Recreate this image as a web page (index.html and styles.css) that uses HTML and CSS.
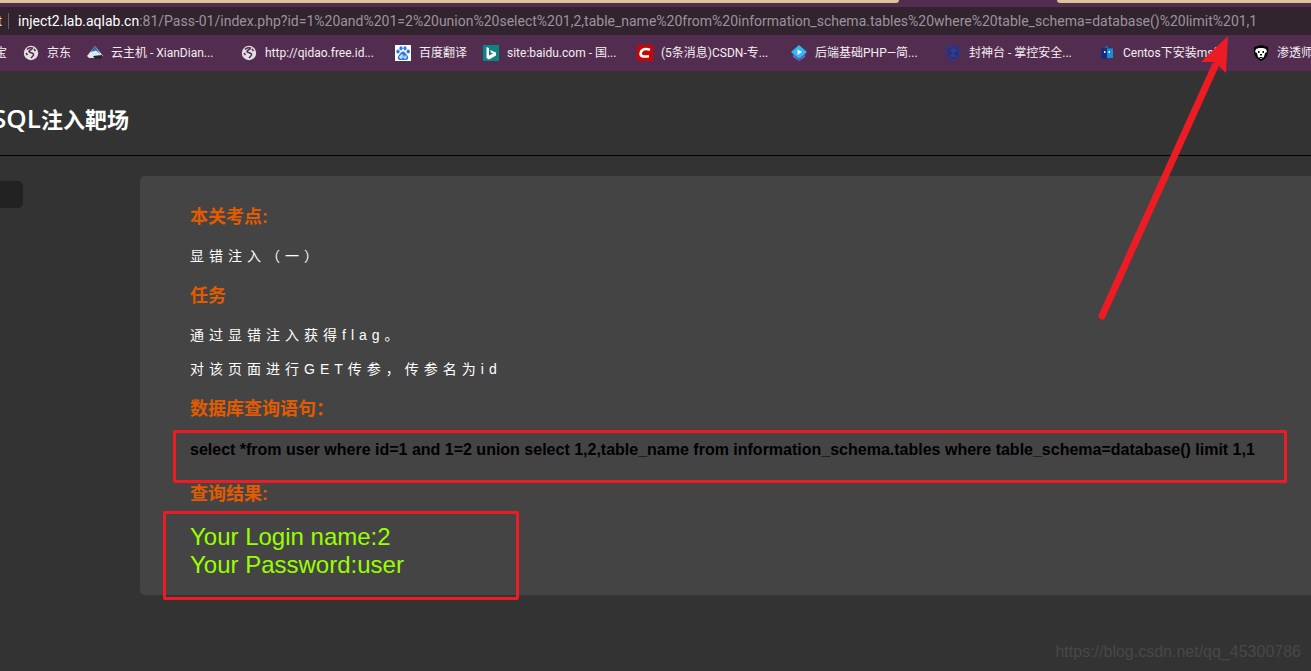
FILE: index.html
```
<!DOCTYPE html>
<html lang="zh-CN">
<head>
<meta charset="utf-8">
<title>SQL注入靶场</title>
<link rel="stylesheet" href="styles.css">
</head>
<body>
<div class="browser">
  <div class="tabs"><span class="tab tab-first"></span><span class="tab tab-last"></span></div>
  <div class="address"><span class="identity">t</span><span class="divider"></span><span class="url"><b>inject2.lab.aqlab.cn</b>:81/Pass-01/index.php?id=1%20and%201=2%20union%20select%201,2,table_name%20from%20information_schema.tables%20where%20table_schema=database()%20limit%201,1</span></div>
  <nav class="bookmarks">
    <a class="mark mark-cut" href="#">宝</a>
    <a class="mark mark-jd" href="#"><svg viewBox="0 0 16 16"><circle cx="8" cy="8" r="7.2" fill="#e4dfe3"/><path d="M4 4.500c1.500-2 4-2 5.500-1.500-.5 2-3 1.500-3.500 3.500 1 1.500 3.500 1 4.500 2.500.5 2-1.500 2.500-2.500 4M11 4l1.500 2M3 8l1.500 2" fill="none" stroke="#532d4f" stroke-width="1.500"/></svg>京东</a>
    <a class="mark mark-long" href="#"><svg viewBox="0 0 16 16"><path d="M8 1L0 11l2 2h5l9-2z" fill="#dfe6ec"/><path d="M8 1L3.500 7 9 5.500 13 9z" fill="#226da3"/><path d="M6 11l9-1v2l-1 2h-2l-1-1-1 1H8z" fill="#202432"/></svg>云主机 - XianDian...</a>
    <a class="mark mark-long" href="#"><svg viewBox="0 0 16 16"><circle cx="8" cy="8" r="7.2" fill="#e4dfe3"/><path d="M4 4.500c1.500-2 4-2 5.500-1.500-.5 2-3 1.500-3.500 3.500 1 1.500 3.500 1 4.500 2.500.5 2-1.500 2.500-2.500 4M11 4l1.500 2M3 8l1.500 2" fill="none" stroke="#532d4f" stroke-width="1.500"/></svg>http://qidao.free.id...</a>
    <a class="mark mark-fanyi" href="#"><svg viewBox="0 0 16 16"><path d="M0 0h16v16H0z" fill="#fff"/><g fill="#2b78e4"><ellipse cx="3" cy="6.5" rx="1.7" ry="2.1"/><ellipse cx="6" cy="3.3" rx="1.6" ry="2.1"/><ellipse cx="10" cy="3.3" rx="1.6" ry="2.1"/><ellipse cx="13.2" cy="6.5" rx="1.7" ry="2.1"/><path d="M8 6.500c2 0 2.500 2 4 3.500 2 2 1.500 5-1 5H5c-2.500 0-3-3-1-5C5.500 8.500 6 6.500 8 6.500z"/></g><path d="M7 9v4H5v-2h2M9 10.500V13h2v-2.500" fill="none" stroke="#fff"/></svg>百度翻译</a>
    <a class="mark mark-long" href="#"><svg viewBox="0 0 16 16"><path d="M0 0h16v16H0z" fill="#0c8484"/><path d="M3.500 2l2.500 1v7.500l4-2-2-1L7 5l6 2.500v3L6 14.500 3.500 13z" fill="#fff"/></svg>site:baidu.com - 国...</a>
    <a class="mark mark-long" href="#"><svg viewBox="0 0 16 16"><path d="M0 0h16v16H0z" fill="#ca0303"/><path d="M13 4.700C9 3.500 5.500 3.600 4 7c-1.500 4 1 5.300 8 4.200" fill="none" stroke="#fff" stroke-width="2.600"/></svg>(5条消息)CSDN-专...</a>
    <a class="mark mark-long" href="#"><svg viewBox="0 0 16 16"><path d="M2 9l6 6 6-6v3l-6 4-6-4z" fill="#6470e8"/><path d="M8 0l8 7-8 7-8-7z" fill="#31b9f5"/><path d="M6.500 4.500L11 7l-4.500 3z" fill="#fff"/></svg>后端基础PHP—简...</a>
    <a class="mark mark-long" href="#"><svg viewBox="0 0 16 16"><path d="M2 2c3 0 4 0 6-1 2 1 3 1 6 1v8c0 2-3 4-6 5-3-1-6-3-6-5z" fill="#382b69" stroke="#29388e" stroke-width="1.500"/><path d="M5 5h6l-5 6h5M8 3v4" fill="none" stroke="#2544aa" stroke-width="1.300"/></svg>封神台 - 掌控安全...</a>
    <a class="mark mark-long" href="#"><svg viewBox="0 0 16 16"><path d="M2 3.500h6V14H3l-1-1z" fill="#172b80"/><path d="M8 3.500h6V13H8z" fill="#148fda"/><path d="M6 1h3v2H6z" fill="#216398"/><path d="M5 6h1.500v2H5zM9.500 6H11v2H9.500z" fill="#e4f4ff"/></svg>Centos下安装msf...</a>
    <a class="mark mark-long" href="#"><svg viewBox="0 0 16 16"><path d="M1 2l7-2 7 2c1 6-1 12-7 14C2 14 0 8 1 2z" fill="#050505"/><path d="M3 4l3-1h4l3 1 1 3-2 1-1 4-3 2-3-2-1-4-2-1z" fill="#fff"/><path d="M5 6h1.500v2H5zM9.500 6H11v2H9.500zM7 9h2v1.500H7zM6.500 12h3v1h-3z" fill="#050505"/></svg>渗透师</a>
  </nav>
</div>
<header class="site-header"><h1><span class="latin">SQL</span>注入靶场</h1></header>
<div class="layout">
  <aside class="side"><div class="side-item"></div></aside>
  <main class="card">
    <h3>本关考点:</h3>
    <p>显错注入（一）</p>
    <h3>任务</h3>
    <p>通过显错注入获得flag。</p>
    <p>对该页面进行GET传参，传参名为id</p>
    <h3>数据库查询语句：</h3>
    <div class="query">select *from user where id=1 and 1=2 union select 1,2,table_name from information_schema.tables where table_schema=database() limit 1,1<span class="frame frame-query"></span></div>
    <h3>查询结果:</h3>
    <div class="result">Your Login name:2<br>Your Password:user<span class="frame frame-result"></span></div>
  </main>
</div>
<svg class="arrow" viewBox="0 0 132 288"><path d="M4 281L117 31" stroke="#ed1c24" stroke-width="7" stroke-linecap="round"/><path d="M130 1L103 27l14 0 11 11z" fill="#ed1c24"/></svg>
<div class="watermark">https://blog.csdn.net/qq_45300786</div>
</body>
</html>
```
FILE: styles.css
```
* { box-sizing: border-box; }
body {
  margin: 0;
  min-height: 100vh;
  position: relative;
  overflow: hidden;
  background: #333;
  color: #fff;
  font-family: "Liberation Sans", "Noto Sans CJK SC", sans-serif;
}
.browser {
  background: #532d4f;
  border-bottom: 1px solid #44293f;
  font-family: Roboto, "Noto Sans CJK SC", sans-serif;
}
.tabs { display: flex; justify-content: space-between; height: 3px; margin-bottom: 4px; }
.tab { background: #dcc399; }
.tab-first { width: 899px; border-bottom-right-radius: 3px; }
.tab-last { width: 254px; border-bottom-left-radius: 3px; }
.address {
  display: flex;
  align-items: center;
  height: 28px;
  background: #32242f;
  color: #9c939a;
  font-size: 14px;
  white-space: nowrap;
}
.identity { display: flex; justify-content: flex-end; width: 8px; color: #e0dadf; flex: none; padding-right: 6px; }
.divider { width: 1px; height: 16px; margin-right: 9px; background: #6a5e67; flex: none; }
.url b { color: #fff; font-weight: 400; }
.bookmarks { display: flex; align-items: center; height: 36px; overflow: hidden; }
.mark {
  display: flex;
  align-items: center;
  gap: 8px;
  flex: none;
  height: 18px;
  color: #f3eef2;
  font-size: 12px;
  line-height: 16px;
  text-decoration: none;
  white-space: nowrap;
}
.mark svg { width: 16px; height: 16px; flex: none; }
.mark-cut { width: 23px; padding-right: 16px; justify-content: flex-end; }
.mark-jd { width: 64px; }
.mark-long { width: 154px; }
.mark-fanyi { width: 88px; }
.site-header { height: 84px; padding-top: 30px; border-bottom: 1px solid #000; }
.site-header h1 { margin: 0 0 0 -8px; font: bold 22px/32px "Open Sans", "Noto Sans CJK SC", sans-serif; }
.latin { font-size: 26px; font-weight: 600; }
.layout { display: flex; align-items: flex-start; padding-top: 20px; }
.side { flex: none; width: 140px; padding-top: 5px; }
.side-item { width: 23px; height: 27px; background: #222; border-radius: 0 5px 5px 0; }
.card { flex: 1; min-width: 0; padding: 31px 0 16px 50px; background: #444; border-radius: 5px 0 0 5px; }
.card h3 { margin: 0 0 19px; color: #e35b00; font-size: 18px; line-height: 20px; }
.card p { margin: 0 0 20px; font-size: 14px; line-height: 20px; letter-spacing: 5px; }
.card p + p { margin-top: -6px; }
.query { position: relative; margin: 0 0 22px; color: #000; font-size: 16px; font-weight: bold; line-height: 24px; white-space: nowrap; }
.result { position: relative; color: #9f0; font-size: 24px; line-height: 28px; }
.frame { position: absolute; border: 3px solid #ed1c24; border-radius: 2px; }
.frame-query { left: -17px; right: 24px; top: -8px; height: 53px; }
.frame-result { left: -27px; width: 356px; top: -12px; height: 89px; }
.arrow { position: absolute; top: 35px; right: 81px; width: 132px; height: 288px; fill: none; }
.watermark { position: absolute; right: 10px; bottom: 9px; color: #484848; font-size: 16px; line-height: 20px; }
```
